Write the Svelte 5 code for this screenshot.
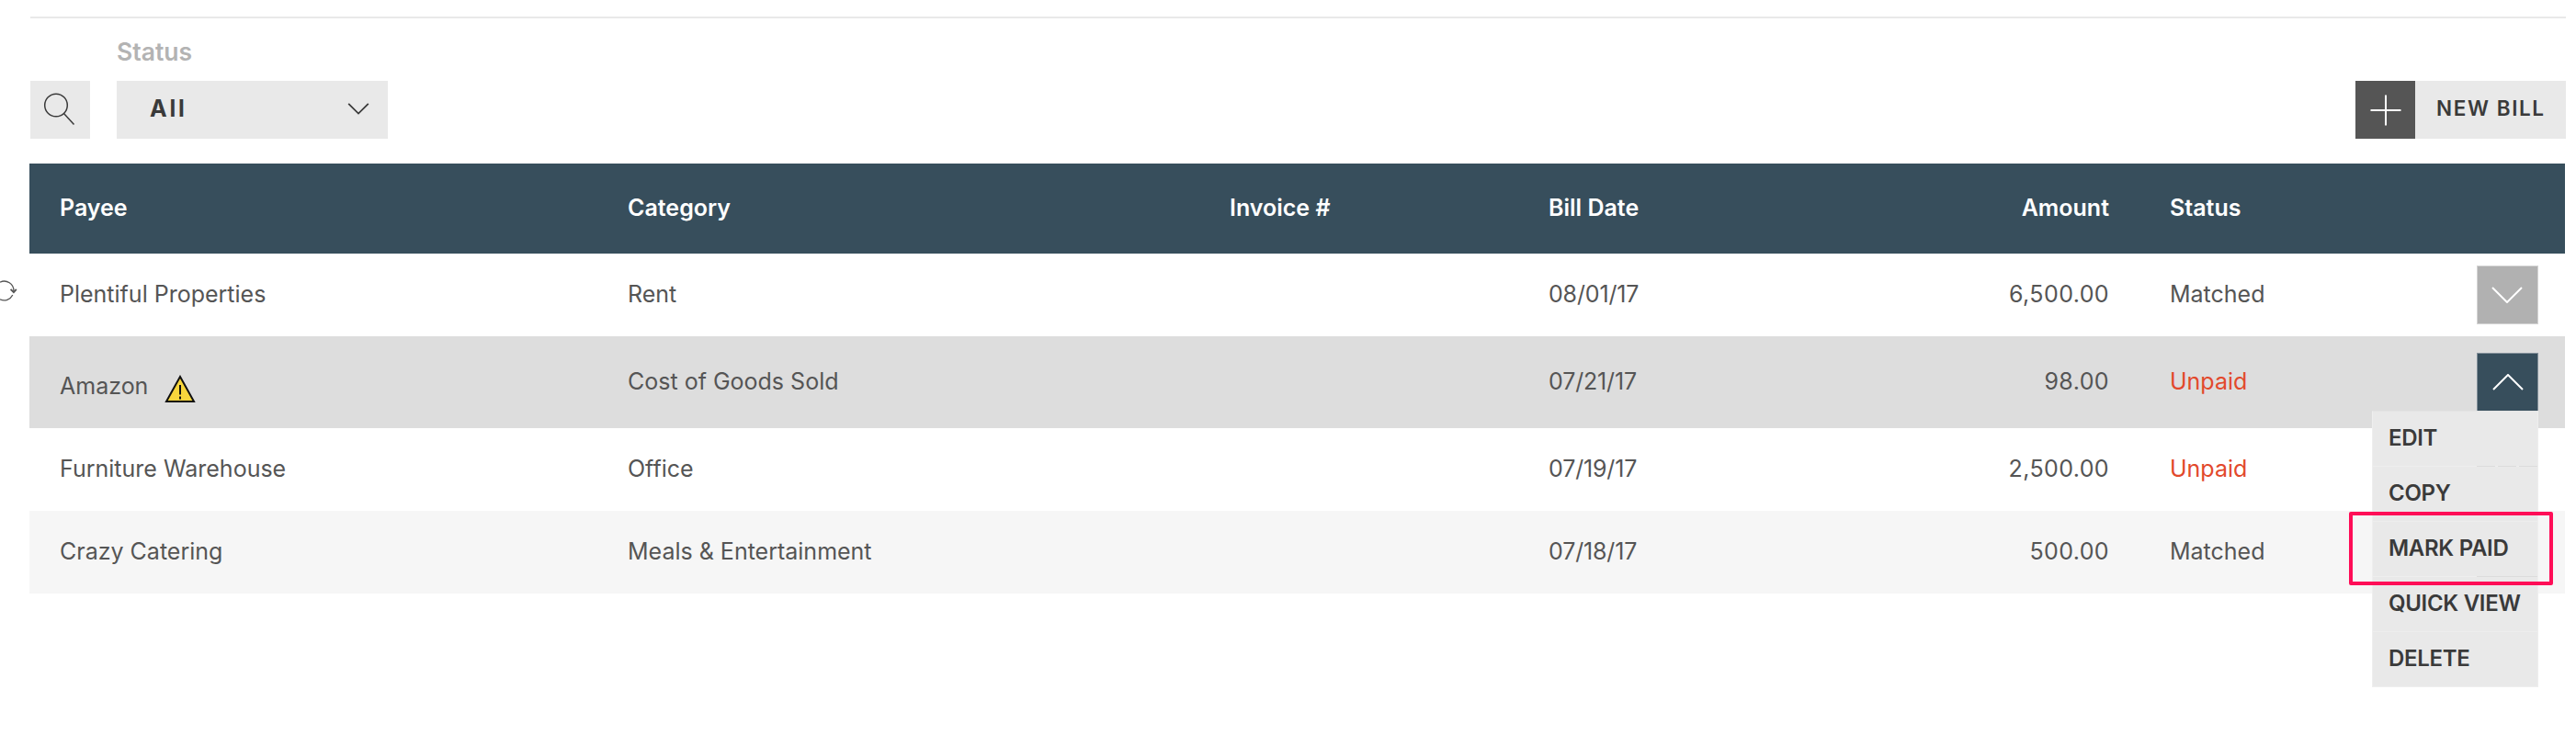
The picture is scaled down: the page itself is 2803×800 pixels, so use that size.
<!-- Bills.svelte — Bill list with status filter and row action menu -->
<script lang="ts">
	interface Bill {
		payee: string;
		category: string;
		invoice: string;
		date: string;
		amount: string;
		status: 'Matched' | 'Unpaid';
		warning?: boolean;
		syncing?: boolean;
		action?: boolean;
	}

	const bills: Bill[] = [
		{ payee: 'Plentiful Properties', category: 'Rent', invoice: '', date: '08/01/17', amount: '6,500.00', status: 'Matched', syncing: true, action: true },
		{ payee: 'Amazon', category: 'Cost of Goods Sold', invoice: '', date: '07/21/17', amount: '98.00', status: 'Unpaid', warning: true, action: true },
		{ payee: 'Furniture Warehouse', category: 'Office', invoice: '', date: '07/19/17', amount: '2,500.00', status: 'Unpaid' },
		{ payee: 'Crazy Catering', category: 'Meals & Entertainment', invoice: '', date: '07/18/17', amount: '500.00', status: 'Matched' }
	];

	const menuItems = ['Edit', 'Copy', 'Mark Paid', 'Quick View', 'Delete'];
	const highlighted = 'Mark Paid';

	let openRow = $state(1);

	function toggleRow(i: number) {
		openRow = openRow === i ? -1 : i;
	}
</script>

<main class="page">
	<div class="toolbar">
		<button class="search" aria-label="Search">
			<svg width="65" height="63" viewBox="0 0 65 63" fill="none" stroke="currentColor" stroke-width="1.5">
				<circle cx="28" cy="26.5" r="12.3" />
				<path d="M36.5 35.5 47.5 47.5" />
			</svg>
		</button>

		<div class="filter">
			<span class="filter-label">Status</span>
			<button class="select">
				<span>All</span>
				<svg width="24" height="14" viewBox="0 0 24 14" fill="none" stroke="currentColor" stroke-width="1.8">
					<path d="M1.2 1.8 12 12.6 22.8 1.8" />
				</svg>
			</button>
		</div>

		<button class="new-bill">
			<span class="plus">
				<svg width="34" height="34" viewBox="0 0 34 34" stroke="currentColor" stroke-width="2">
					<path d="M17 .5V33.5M.5 17H33.5" />
				</svg>
			</span>
			<span class="new-label">NEW BILL</span>
		</button>
	</div>

	<div class="table">
		<div class="row head">
			<span>Payee</span>
			<span>Category</span>
			<span>Invoice #</span>
			<span>Bill Date</span>
			<span class="amount">Amount</span>
			<span class="status">Status</span>
		</div>

		{#each bills as bill, i}
			<div class="row" class:odd={i % 2 === 1} class:open={openRow === i}>
				{#if bill.syncing}
					<svg class="sync" width="20" height="28" viewBox="0 0 20 28" fill="none" stroke="#555" stroke-width="1.3">
						<path d="M0 4.1A10.4 10.4 0 0 1 14.9 14M0 22.9A10.4 10.4 0 0 0 13.8 18" />
						<path d="M11.6 11.8 14.9 15.2 17.8 11.8" stroke-width="1.8" />
					</svg>
				{/if}
				<span class="payee" class:flagged={bill.warning}>
					{bill.payee}
					{#if bill.warning}
						<svg width="34" height="32" viewBox="0 0 34 32">
							<path d="M17 2 32 29H2Z" fill="#f8d63c" stroke="#111" stroke-width="2" />
							<path d="M17 11V21.5M17 23.5V26.5" stroke="#111" stroke-width="2" />
						</svg>
					{/if}
				</span>
				<span>{bill.category}</span>
				<span>{bill.invoice}</span>
				<span class="date">{bill.date}</span>
				<span class="amount value">{bill.amount}</span>
				<span class="status" class:unpaid={bill.status === 'Unpaid'}>{bill.status}</span>
				{#if bill.action}
					<div class="action">
						<button class="toggle" onclick={() => toggleRow(i)} aria-label="Actions">
							<svg width="34" height="18" viewBox="0 0 34 18" fill="none" stroke="currentColor" stroke-width="2">
								<path d={openRow === i ? 'M1 17 17 1 33 17' : 'M1 1 17 17 33 1'} />
							</svg>
						</button>
						{#if openRow === i}
							<ul class="menu">
								{#each menuItems as item}
									<li class:highlighted={item === highlighted}>{item}</li>
								{/each}
							</ul>
						{/if}
					</div>
				{/if}
			</div>
		{/each}
	</div>
</main>

<style>
	:global(body) {
		background: #fff;
	}

	.page {
		box-sizing: border-box;
		height: 800px;
		padding: 18px 11px 0 32px;
		overflow: hidden;
		font: 400 25px/30px Inter, 'Liberation Sans', sans-serif;
		color: #555;
	}

	button {
		padding: 0;
		border: none;
		font: inherit;
		color: #3a3a3a;
		background: #e9e9e9;
		cursor: pointer;
	}

	svg {
		display: block;
		flex: none;
	}

	.toolbar {
		display: flex;
		align-items: flex-end;
		box-sizing: border-box;
		height: 133px;
		margin: 0 0 27px 1px;
		border-top: 2px solid #e9e9e9;
	}

	.search {
		width: 65px;
		height: 63px;
		margin-right: 29px;
	}

	.filter {
		display: flex;
		flex-direction: column;
		gap: 17px;
	}

	.filter-label {
		font-size: 26.5px;
		font-weight: 600;
		color: #b3b3b3;
	}

	.select {
		display: flex;
		align-items: center;
		justify-content: space-between;
		box-sizing: border-box;
		width: 295px;
		height: 63px;
		padding: 0 20px 3px 36px;
		font-weight: 700;
		letter-spacing: 2.8px;
	}

	.new-bill {
		display: flex;
		height: 63px;
		margin-left: auto;
		font-size: 22.5px;
		font-weight: 600;
		letter-spacing: 1.6px;
	}

	.plus {
		display: flex;
		align-items: center;
		justify-content: center;
		width: 65px;
		height: 63px;
		color: #fff;
		background: #555;
	}

	.new-label {
		width: 141px;
		padding-left: 23px;
		line-height: 60px;
		text-align: left;
	}

	.table {
		width: 2759px;
	}

	.row {
		position: relative;
		display: grid;
		grid-template-columns: 618px 655px 347px 300px 310px 300px 1fr;
		align-items: center;
		box-sizing: border-box;
		height: 90px;
		padding: 0 29px 2px 33px;
	}

	.row.odd {
		background: #f6f6f6;
	}

	.row.open {
		height: 100px;
		background: #ddd;
	}

	.row.head {
		height: 98px;
		font-weight: 600;
		color: #fff;
		background: #374e5c;
	}

	.payee {
		display: flex;
		align-items: center;
	}

	.payee.flagged {
		gap: 18px;
		padding-top: 10px;
	}

	.flagged svg {
		margin: 4px 0 -4px;
	}

	.date {
		letter-spacing: -0.15px;
	}

	.amount {
		text-align: right;
	}

	.amount.value {
		letter-spacing: 0.4px;
	}

	.status {
		padding-left: 66px;
	}

	.unpaid {
		color: #e2492c;
	}

	.sync {
		position: absolute;
		top: 27px;
		left: -32px;
	}

	.action {
		position: relative;
		justify-self: end;
		padding-top: 2px;
	}

	.toggle {
		display: flex;
		align-items: center;
		justify-content: center;
		box-sizing: border-box;
		width: 67px;
		height: 64px;
		padding-right: 2px;
		border: 1px solid #d4d4d4;
		color: #fff;
		background: #b1b1b1;
	}

	.open .toggle {
		padding-right: 0;
		border-color: #83909a;
		background: #374e5c;
	}

	.menu {
		position: absolute;
		z-index: 10;
		top: 65px;
		right: 0;
		box-sizing: border-box;
		width: 181px;
		height: 301px;
		margin: 0;
		padding: 0;
		border: 1px solid #eee;
		border-top-color: #e4e4e4;
		list-style: none;
		font-size: 24px;
		font-weight: 600;
		line-height: 57px;
		letter-spacing: -0.3px;
		text-transform: uppercase;
		white-space: nowrap;
		color: #3a3a3a;
		background: #e9e9e9;
	}

	.menu li {
		position: relative;
		padding: 0 0 3px 17px;
		background: linear-gradient(#eee, #eee) left bottom / 100% 1px no-repeat;
	}

	/* separators are darker below the toggle column */
	.menu li:nth-child(1) {
		background:
			repeating-linear-gradient(90deg, #dcdcdc 0 20px, #eee 20px 23px) right bottom / 66px 1px no-repeat,
			linear-gradient(#eee, #eee) left bottom / 100% 1px no-repeat;
	}

	.menu li:nth-child(3) {
		background:
			linear-gradient(#dcdcdc, #dcdcdc) right bottom / 66px 1px no-repeat,
			linear-gradient(#eee, #eee) left bottom / 100% 1px no-repeat;
	}

	.menu li:last-child {
		background: none;
	}

	/* callout around the highlighted action */
	.highlighted::after {
		content: '';
		position: absolute;
		top: -11px;
		left: -26px;
		box-sizing: border-box;
		width: 222px;
		height: 80px;
		border: 4px solid #ff0d57;
		border-radius: 2px;
		z-index: 1;
	}
</style>
